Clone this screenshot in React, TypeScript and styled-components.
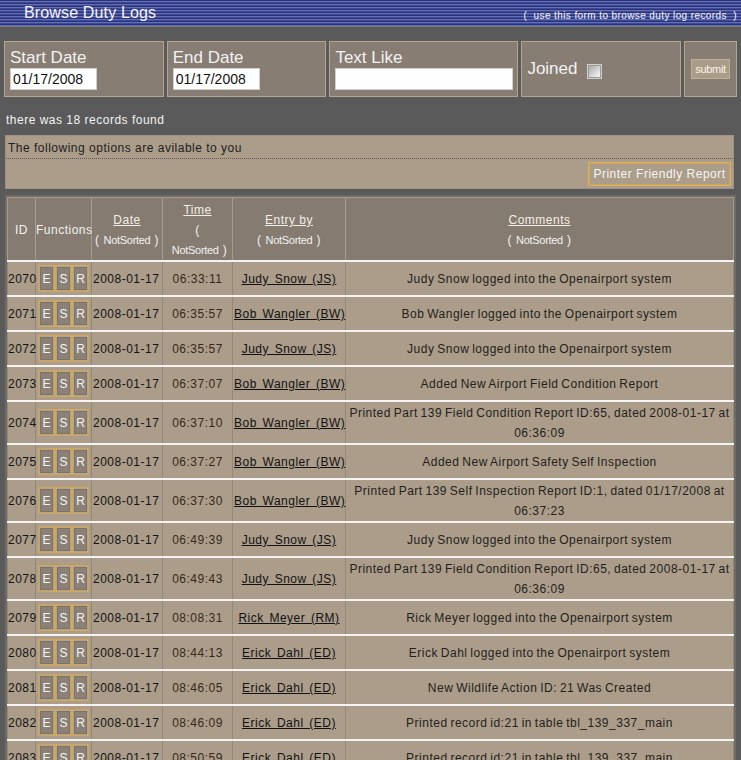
import React from 'react';
import styled, { createGlobalStyle } from 'styled-components';

const GlobalStyle = createGlobalStyle`
  html { overflow: hidden; }
  body {
    margin: 0;
    background: #5a5a5a;
    font-family: "Liberation Sans", Arial, sans-serif;
  }
`;

const Page = styled.div`
  display: flex;
  flex-direction: column;
  width: 741px;
`;

const TitleBar = styled.header`
  height: 26px;
  display: flex;
  align-items: center;
  justify-content: space-between;
  padding: 0 4px 0 24px;
  background: repeating-linear-gradient(
    to bottom,
    #2b3377 0px,
    #2b3377 1px,
    #6270bb 1px,
    #6270bb 2px,
    #3f4890 2px,
    #3f4890 3px
  );
  color: #f4f4f8;
`;

const Title = styled.h1`
  margin: 0;
  font-size: 16px;
  font-weight: normal;
  letter-spacing: 0.15px;
  line-height: 26px;
`;

const Hint = styled.span`
  font-size: 10px;
  letter-spacing: 0.4px;
  margin-top: 4px;
  white-space: pre;
`;

const Main = styled.main`
  border-top: 1px solid #7b7b7b;
  padding: 14px 0 20px;
  display: flex;
  flex-direction: column;
`;

const FilterRow = styled.form`
  display: flex;
  gap: 3px;
  padding: 0 4px;
  margin: 0;
`;

const FilterBox = styled.div<{ $w: number; $layout?: 'stack' | 'inline' | 'center' }>`
  width: ${(p) => p.$w}px;
  height: 56px;
  box-sizing: border-box;
  background: #877d72;
  border: 1px solid #b2a693;
  display: flex;
  flex-direction: ${(p) => (p.$layout === 'stack' || !p.$layout ? 'column' : 'row')};
  align-items: ${(p) => (p.$layout === 'stack' || !p.$layout ? 'flex-start' : 'center')};
  justify-content: ${(p) => (p.$layout === 'center' ? 'center' : 'flex-start')};
  padding: ${(p) => (p.$layout === 'stack' || !p.$layout ? '6px 5px 0' : '0 5px')};
`;

const FieldLabel = styled.label`
  display: block;
  font-size: 17px;
  line-height: 20px;
  color: #f2f2f4;
`;

const TextInput = styled.input<{ $w: number }>`
  width: ${(p) => p.$w}px;
  height: 22px;
  box-sizing: border-box;
  border: 1px solid #cfcfcf;
  background: #fff;
  padding: 0 2px;
  margin: 0;
  font-family: "Liberation Sans", Arial, sans-serif;
  font-size: 14px;
  color: #111;
  outline: none;
`;

const CheckBox = styled.input`
  appearance: none;
  width: 13px;
  height: 13px;
  margin: 5px 0 0 11px;
  box-sizing: border-box;
  border: 1px solid #9a9a9a;
  background: linear-gradient(135deg, #a8a8a8, #fafafa);
  box-shadow: 0 0 0 1px #cfcfcf;
`;

const SubmitButton = styled.button`
  width: 39px;
  height: 20px;
  box-sizing: border-box;
  padding: 0;
  background: #aa9d88;
  border: 1px solid #bcb09d;
  color: #fbf3ea;
  font-family: "Liberation Sans", Arial, sans-serif;
  font-size: 11px;
  letter-spacing: -0.3px;
`;

const RecordsFound = styled.p`
  margin: 13px 0 5px 6px;
  font-size: 12px;
  letter-spacing: 0.5px;
  line-height: 20px;
  color: #f2f2f2;
`;

const OptionsPanel = styled.section`
  margin: 0 7px 0 5px;
  background: #ab9d89;
  border: 1px solid #9d9284;
  display: flex;
  flex-direction: column;
`;

const OptionsText = styled.div`
  padding: 2px 2px 0;
  line-height: 20px;
  font-size: 12px;
  letter-spacing: 0.5px;
  color: #1e1e1e;
  border-bottom: 1px dotted #5e5850;
`;

const OptionsActions = styled.div`
  display: flex;
  justify-content: flex-end;
  padding: 3px 2px 2px;
`;

const PrintButton = styled.button`
  width: 143px;
  height: 24px;
  box-sizing: border-box;
  padding: 0;
  background: #ab9d89;
  border: 1px solid #e0b050;
  box-shadow: inset 0 0 0 1px #c4a46c;
  color: #f6f6f6;
  font-family: "Liberation Sans", Arial, sans-serif;
  font-size: 12px;
  letter-spacing: 0.5px;
`;

const TableFrame = styled.div`
  margin: 6px 5px 0;
  padding: 2px;
  background: #6e6a66;
`;

const LogTable = styled.table`
  width: 100%;
  border-collapse: collapse;
  table-layout: fixed;
  font-size: 12px;
  letter-spacing: 0.5px;
`;

const HeadCell = styled.th`
  background: #857b70;
  border: 1px solid #a99c8a;
  color: #f2f2f2;
  font-weight: normal;
  line-height: 20px;
  padding: 2px 0 0;
  text-align: center;
  vertical-align: middle;
  white-space: nowrap;
`;

const HeadLink = styled.a`
  color: #f4efe4;
  text-decoration: underline;
`;

const NotSorted = styled.span`
  font-size: 11px;
  letter-spacing: -0.3px;
  margin: 0 4px;
`;

const Row = styled.tr``;

const Cell = styled.td<{ $tone?: 'id' | 'date' | 'time' | 'comment' }>`
  background: #ab9d8a;
  border-top: 2px solid #f3f3f3;
  border-left: 1px solid #93887a;
  border-right: 1px solid #93887a;
  line-height: 20px;
  padding: 1px ${(p) => (p.$tone === 'id' ? '0' : '1px')} 0;
  text-align: ${(p) => (p.$tone === 'date' ? 'left' : 'center')};
  vertical-align: middle;
  word-spacing: ${(p) => (p.$tone === 'comment' ? '-1px' : '0')};
  color: ${(p) =>
    p.$tone === 'time' ? '#36291a' : p.$tone === 'comment' ? '#241f1b' : '#141414'};
  white-space: ${(p) => (p.$tone === 'comment' ? 'normal' : 'nowrap')};
`;

const FuncCell = styled.td`
  background: #ab9d8a;
  border-top: 2px solid #f3f3f3;
  border-left: 1px solid #93887a;
  border-right: 1px solid #93887a;
  padding: 3px 0;
  vertical-align: middle;
`;

const FuncGroup = styled.div`
  display: flex;
  width: fit-content;
  margin: 0 auto;
`;

const FuncButton = styled.button`
  width: 17px;
  height: 27px;
  box-sizing: border-box;
  padding: 1px;
  margin: 0;
  border: 1px solid #d2a655;
  background: #b3a48e;
  display: flex;
`;

const FuncFace = styled.span`
  flex: 1;
  display: flex;
  align-items: center;
  justify-content: center;
  background: #8b8177;
  border: 1px solid #7b7268;
  color: #f4f4f4;
  font-family: "Liberation Sans", Arial, sans-serif;
  font-size: 12px;
`;

const EntryLink = styled.a`
  color: #121212;
  text-decoration: underline;
  white-space: pre;
  word-spacing: -1px;
`;

type LogRow = { id: number; time: string; by: string; comment: string };

const rows: LogRow[] = [
  { id: 2070, time: '06:33:11', by: 'Judy  Snow  (JS)', comment: 'Judy Snow logged into the Openairport system' },
  { id: 2071, time: '06:35:57', by: 'Bob  Wangler  (BW)', comment: 'Bob Wangler logged into the Openairport system' },
  { id: 2072, time: '06:35:57', by: 'Judy  Snow  (JS)', comment: 'Judy Snow logged into the Openairport system' },
  { id: 2073, time: '06:37:07', by: 'Bob  Wangler  (BW)', comment: 'Added New Airport Field Condition Report' },
  { id: 2074, time: '06:37:10', by: 'Bob  Wangler  (BW)', comment: 'Printed Part 139 Field Condition Report ID:65, dated 2008-01-17 at 06:36:09' },
  { id: 2075, time: '06:37:27', by: 'Bob  Wangler  (BW)', comment: 'Added New Airport Safety Self Inspection' },
  { id: 2076, time: '06:37:30', by: 'Bob  Wangler  (BW)', comment: 'Printed Part 139 Self Inspection Report ID:1, dated 01/17/2008 at 06:37:23' },
  { id: 2077, time: '06:49:39', by: 'Judy  Snow  (JS)', comment: 'Judy Snow logged into the Openairport system' },
  { id: 2078, time: '06:49:43', by: 'Judy  Snow  (JS)', comment: 'Printed Part 139 Field Condition Report ID:65, dated 2008-01-17 at 06:36:09' },
  { id: 2079, time: '08:08:31', by: 'Rick  Meyer  (RM)', comment: 'Rick Meyer logged into the Openairport system' },
  { id: 2080, time: '08:44:13', by: 'Erick  Dahl  (ED)', comment: 'Erick Dahl logged into the Openairport system' },
  { id: 2081, time: '08:46:05', by: 'Erick  Dahl  (ED)', comment: 'New Wildlife Action ID: 21 Was Created' },
  { id: 2082, time: '08:46:09', by: 'Erick  Dahl  (ED)', comment: 'Printed record id:21 in table tbl_139_337_main' },
  { id: 2083, time: '08:50:59', by: 'Erick  Dahl  (ED)', comment: 'Printed record id:21 in table tbl_139_337_main' },
];

const SortNote = () => (
  <>
    (<NotSorted>NotSorted</NotSorted>)
  </>
);

export default function App() {
  return (
    <Page>
      <GlobalStyle />
      <TitleBar>
        <Title>Browse Duty Logs</Title>
        <Hint>{'(  use this form to browse duty log records  )'}</Hint>
      </TitleBar>
      <Main>
        <FilterRow onSubmit={(e) => e.preventDefault()}>
          <FilterBox $w={160}>
            <FieldLabel>Start Date</FieldLabel>
            <TextInput $w={87} defaultValue="01/17/2008" />
          </FilterBox>
          <FilterBox $w={160}>
            <FieldLabel>End Date</FieldLabel>
            <TextInput $w={87} defaultValue="01/17/2008" />
          </FilterBox>
          <FilterBox $w={189}>
            <FieldLabel>Text Like</FieldLabel>
            <TextInput $w={178} defaultValue="" />
          </FilterBox>
          <FilterBox $w={160} $layout="inline">
            <FieldLabel>Joined</FieldLabel>
            <CheckBox type="checkbox" />
          </FilterBox>
          <FilterBox $w={53} $layout="center">
            <SubmitButton type="submit">submit</SubmitButton>
          </FilterBox>
        </FilterRow>

        <RecordsFound>there was 18 records found</RecordsFound>

        <OptionsPanel>
          <OptionsText>The following options are avilable to you</OptionsText>
          <OptionsActions>
            <PrintButton>Printer Friendly Report</PrintButton>
          </OptionsActions>
        </OptionsPanel>

        <TableFrame>
          <LogTable>
            <colgroup>
              <col style={{ width: 28 }} />
              <col style={{ width: 56 }} />
              <col style={{ width: 71 }} />
              <col style={{ width: 70 }} />
              <col style={{ width: 113 }} />
              <col />
            </colgroup>
            <thead>
              <tr>
                <HeadCell>ID</HeadCell>
                <HeadCell>Functions</HeadCell>
                <HeadCell>
                  <HeadLink href="#">Date</HeadLink>
                  <br />
                  <SortNote />
                </HeadCell>
                <HeadCell>
                  <HeadLink href="#">Time</HeadLink>
                  <br />(<br />
                  <NotSorted>NotSorted</NotSorted>)
                </HeadCell>
                <HeadCell>
                  <HeadLink href="#">Entry by</HeadLink>
                  <br />
                  <SortNote />
                </HeadCell>
                <HeadCell>
                  <HeadLink href="#">Comments</HeadLink>
                  <br />
                  <SortNote />
                </HeadCell>
              </tr>
            </thead>
            <tbody>
              {rows.map((r) => (
                <Row key={r.id}>
                  <Cell $tone="id">{r.id}</Cell>
                  <FuncCell>
                    <FuncGroup>
                      {['E', 'S', 'R'].map((l) => (
                        <FuncButton key={l}>
                          <FuncFace>{l}</FuncFace>
                        </FuncButton>
                      ))}
                    </FuncGroup>
                  </FuncCell>
                  <Cell $tone="date">2008-01-17</Cell>
                  <Cell $tone="time">{r.time}</Cell>
                  <Cell>
                    <EntryLink href="#">{r.by}</EntryLink>
                  </Cell>
                  <Cell $tone="comment">{r.comment}</Cell>
                </Row>
              ))}
            </tbody>
          </LogTable>
        </TableFrame>
      </Main>
    </Page>
  );
}
